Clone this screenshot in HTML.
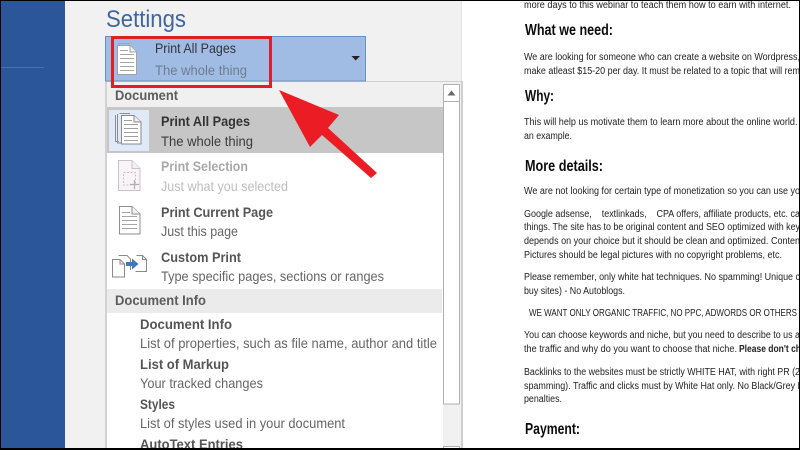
<!DOCTYPE html>
<html lang="en">
<head>
<meta charset="utf-8">
<title>Print Settings</title>
<style>
html,body{margin:0;padding:0;background:#fff;width:800px;height:450px;overflow:hidden}
svg{display:block;position:absolute;left:0;top:0}
text{font-family:"Liberation Sans",sans-serif;white-space:pre}
.ui{font-size:14px}
.b{font-weight:bold}
.doc{font-size:10px;fill:#222}
.h{font-size:15.500px;font-weight:bold;fill:#0c0c0c}
.soft{filter:blur(.35px)}
</style>
</head>
<body>
<svg width="800" height="450" viewBox="0 0 800 450" xmlns="http://www.w3.org/2000/svg">
<defs>
<clipPath id="docclip"><rect x="466" y="1" width="333" height="448"/></clipPath>
<clipPath id="menuclip"><rect x="106" y="81" width="337" height="368"/></clipPath>
</defs>
<rect width="800" height="450" fill="#fff"/>
<rect x="0" y="0" width="65" height="450" fill="#2b579a"/>
<rect x="1" y="67" width="43" height="1" fill="#4a70a8"/>
<rect x="65" y="0" width="397" height="81" fill="#f1f1f1"/>
<rect x="65" y="81" width="41" height="369" fill="#f1f1f1"/>
<rect x="461" y="0" width="1" height="81" fill="#e2e2e2"/>
<rect x="105" y="81" width="2" height="369" fill="#d2d2d2"/>
<rect x="106" y="81" width="356" height="1" fill="#cfcfcf"/>
<rect x="107" y="82" width="336" height="25" fill="#f0f0f0"/>
<rect x="107" y="107" width="336" height="46" fill="#c6c6c6"/>
<rect x="107" y="289" width="335" height="24" fill="#ebebeb"/>
<g class="soft">
<text x="106" y="27" font-size="24" fill="#3f659f" textLength="80" lengthAdjust="spacingAndGlyphs">Settings</text>
<rect x="105.500" y="36.500" width="260" height="44.500" fill="#a0bce4" stroke="#6c90c4"/>
<path d="M119 45V43.500H130" fill="none" stroke="#9aa6b8"/>
<path d="M117.500 45.500H130L136.500 52V74.500H117.500Z" fill="#fff" stroke="#a2a2a2"/>
<path d="M130 45.500V52H136.500" fill="#eee" stroke="#a2a2a2"/>
<path d="M120 50.500H128M120 54.500H134M120 58.500H134M120 62.500H134M120 66.500H134M120 70.500H134" stroke="#a8a8a8"/>
<text class="ui" x="155" y="53" fill="#30343c" textLength="81" lengthAdjust="spacingAndGlyphs">Print All Pages</text>
<text class="ui" x="155" y="75" fill="#6d7d92" textLength="92" lengthAdjust="spacingAndGlyphs">The whole thing</text>
<path d="M351.500 56H360L355.700 60.500Z" fill="#222"/>
<text class="ui b" x="115" y="100" fill="#5c5c5c" textLength="63" lengthAdjust="spacingAndGlyphs">Document</text>
<rect x="109" y="110" width="40" height="41" fill="#dfe9f7"/>
<path d="M115.500 115V141.500H119M117.500 114V143H121M119.500 113.500H130" fill="none" stroke="#8f8f8f"/>
<path d="M121.500 115.500H134L141 122V144H121.500Z" fill="#fff" stroke="#8a8a8a"/>
<path d="M134 115.500V122H141" fill="#eee" stroke="#8a8a8a"/>
<path d="M124 120.500H132M124 124.500H138M124 128.500H138M124 132.500H138M124 136.500H138M124 140.500H138" stroke="#a0a0a0"/>
<text class="ui b" x="161" y="126" fill="#333" textLength="89" lengthAdjust="spacingAndGlyphs">Print All Pages</text>
<text class="ui" x="161" y="146" fill="#3c3c3c" textLength="92" lengthAdjust="spacingAndGlyphs">The whole thing</text>
<path d="M118.500 160.500H132L140 168.500V190.500H118.500Z" fill="#f8f4f8" stroke="#c9c3c9"/>
<path d="M132 160.500V168.500H140" fill="#f1f1f1" stroke="#c9c3c9"/>
<rect x="123.500" y="172.500" width="12" height="12.500" fill="none" stroke="#cdbfce" stroke-dasharray="2 1.500"/>
<path d="M130 184.500H139M134.500 180V189" stroke="#b0b0b0" stroke-width="1.200"/>
<text class="ui b" x="161" y="171" fill="#a9a9a9" textLength="87" lengthAdjust="spacingAndGlyphs">Print Selection</text>
<text class="ui" x="161" y="191" fill="#bebebe" textLength="127" lengthAdjust="spacingAndGlyphs">Just what you selected</text>
<path d="M119.500 206.500H132L140 214V234H119.500Z" fill="#fff" stroke="#8e8e8e"/>
<path d="M132 206.500V214H140" fill="#f1f1f1" stroke="#8e8e8e"/>
<path d="M122 212.500H130M122 216.500H137M122 220.500H137M122 224.500H137M122 228.500H137" stroke="#a6a6a6"/>
<text class="ui b" x="161" y="217" fill="#555" textLength="112" lengthAdjust="spacingAndGlyphs">Print Current Page</text>
<text class="ui" x="161" y="236" fill="#666" textLength="77" lengthAdjust="spacingAndGlyphs">Just this page</text>
<path d="M118.500 255.500H127L130.500 259V270" fill="none" stroke="#8a8a8a"/>
<path d="M112.500 259.500H120L124.500 264V277H112.500Z" fill="#fff" stroke="#8a8a8a"/>
<path d="M120 259.500V264H124.500" fill="none" stroke="#8a8a8a"/>
<path d="M136.500 255.500H142.500L146.500 259.500V271.500H135.500" fill="#fff" stroke="#8a8a8a"/>
<path d="M142.500 255.500V259.500H146.500" fill="none" stroke="#8a8a8a"/>
<path d="M126 262H132V258.500L138.500 264L132 269.500V266H126Z" fill="#3f78bd"/>
<text class="ui b" x="161" y="262" fill="#555" textLength="80" lengthAdjust="spacingAndGlyphs">Custom Print</text>
<text class="ui" x="161" y="281" fill="#666" textLength="223" lengthAdjust="spacingAndGlyphs">Type specific pages, sections or ranges</text>
<text class="ui b" x="115" y="305" fill="#5c5c5c" textLength="91" lengthAdjust="spacingAndGlyphs">Document Info</text>
<text class="ui b" x="140" y="329" fill="#555" textLength="92" lengthAdjust="spacingAndGlyphs">Document Info</text>
<text class="ui" x="140" y="348" fill="#666" textLength="297" lengthAdjust="spacingAndGlyphs">List of properties, such as file name, author and title</text>
<text class="ui b" x="140" y="369" fill="#555" textLength="89" lengthAdjust="spacingAndGlyphs">List of Markup</text>
<text class="ui" x="140" y="388" fill="#666" textLength="123" lengthAdjust="spacingAndGlyphs">Your tracked changes</text>
<text class="ui b" x="140" y="409" fill="#555" textLength="35" lengthAdjust="spacingAndGlyphs">Styles</text>
<text class="ui" x="140" y="428" fill="#666" textLength="205" lengthAdjust="spacingAndGlyphs">List of styles used in your document</text>
<g clip-path="url(#menuclip)"><text class="ui b" x="140" y="449" fill="#555" textLength="103" lengthAdjust="spacingAndGlyphs">AutoText Entries</text></g>
<rect x="443" y="82" width="19" height="368" fill="#f1f1f1"/>
<rect x="443.500" y="84.500" width="16" height="17" fill="#fff" stroke="#b0b0b0"/>
<path d="M447.500 95.500L451.500 90.500L455.500 95.500Z" fill="#6a6a6a"/>
<rect x="443.500" y="101.500" width="16" height="302.500" fill="#fff" stroke="#b0b0b0"/>
<rect x="443.500" y="446.500" width="16" height="6" fill="#fff" stroke="#b0b0b0"/>
<rect x="461" y="81" width="2" height="369" fill="#cfcfcf"/>
<g clip-path="url(#docclip)">
<text class="doc" x="524" y="8" textLength="267" lengthAdjust="spacingAndGlyphs">more days to this webinar to teach them how to earn with internet.</text>
<text class="h" x="525" y="35" textLength="88" lengthAdjust="spacingAndGlyphs">What we need:</text>
<text class="doc" x="524" y="60" textLength="276" lengthAdjust="spacingAndGlyphs">We are looking for someone who can create a website on Wordpress,</text>
<text class="doc" x="524" y="74" textLength="276" lengthAdjust="spacingAndGlyphs">make atleast $15-20 per day. It must be related to a topic that will rem</text>
<text class="h" x="525" y="101" textLength="29" lengthAdjust="spacingAndGlyphs">Why:</text>
<text class="doc" x="524" y="125" textLength="276" lengthAdjust="spacingAndGlyphs">This will help us motivate them to learn more about the online world. </text>
<text class="doc" x="524" y="139" textLength="48" lengthAdjust="spacingAndGlyphs">an example.</text>
<text class="h" x="525" y="171" textLength="78" lengthAdjust="spacingAndGlyphs">More details:</text>
<text class="doc" x="524" y="194" textLength="276" lengthAdjust="spacingAndGlyphs">We are not looking for certain type of monetization so you can use yo</text>
<text class="doc" x="524" y="217" textLength="276" lengthAdjust="spacingAndGlyphs">Google adsense,    textlinkads,    CPA offers, affiliate products, etc. ca</text>
<text class="doc" x="524" y="230" textLength="276" lengthAdjust="spacingAndGlyphs">things. The site has to be original content and SEO optimized with key</text>
<text class="doc" x="524" y="244" textLength="276" lengthAdjust="spacingAndGlyphs">depends on your choice but it should be clean and optimized. Conten</text>
<text class="doc" x="524" y="258" textLength="258" lengthAdjust="spacingAndGlyphs">Pictures should be legal pictures with no copyright problems, etc.</text>
<text class="doc" x="524" y="280" textLength="276" lengthAdjust="spacingAndGlyphs">Please remember, only white hat techniques. No spamming! Unique c</text>
<text class="doc" x="524" y="294" textLength="101" lengthAdjust="spacingAndGlyphs">buy sites) - No Autoblogs.</text>
<text class="doc" x="529" y="316" textLength="268" lengthAdjust="spacingAndGlyphs">WE WANT ONLY ORGANIC TRAFFIC, NO PPC, ADWORDS OR OTHERS</text>
<text class="doc" x="524" y="338" textLength="276" lengthAdjust="spacingAndGlyphs">You can choose keywords and niche, but you need to describe to us a</text>
<text class="doc" x="524" y="352" textLength="213" lengthAdjust="spacingAndGlyphs">the traffic and why do you want to choose that niche.</text>
<text class="doc" x="739" y="352" font-weight="bold" textLength="62" lengthAdjust="spacingAndGlyphs">Please don't ch</text>
<text class="doc" x="524" y="375" textLength="276" lengthAdjust="spacingAndGlyphs">Backlinks to the websites must be strictly WHITE HAT, with right PR (2</text>
<text class="doc" x="524" y="389" textLength="276" lengthAdjust="spacingAndGlyphs">spamming). Traffic and clicks must by White Hat only. No Black/Grey I</text>
<text class="doc" x="524" y="402" textLength="38" lengthAdjust="spacingAndGlyphs">penalties.</text>
<text class="h" x="525" y="434" textLength="55" lengthAdjust="spacingAndGlyphs">Payment:</text>
</g>
</g>
<rect x="112.500" y="37.500" width="158" height="49" fill="none" stroke="#e01e26" stroke-width="3"/>
<path d="M279 90L339 115L328 128L377 173L371 178L322 135L310 147Z" fill="#ec1c24"/>
<rect x="0" y="0" width="800" height="1" fill="#000"/>
<rect x="0" y="448" width="800" height="2" fill="#000"/>
<rect x="0" y="0" width="1" height="450" fill="#000"/>
<rect x="799" y="0" width="1" height="450" fill="#000"/>
</svg>
</body>
</html>
